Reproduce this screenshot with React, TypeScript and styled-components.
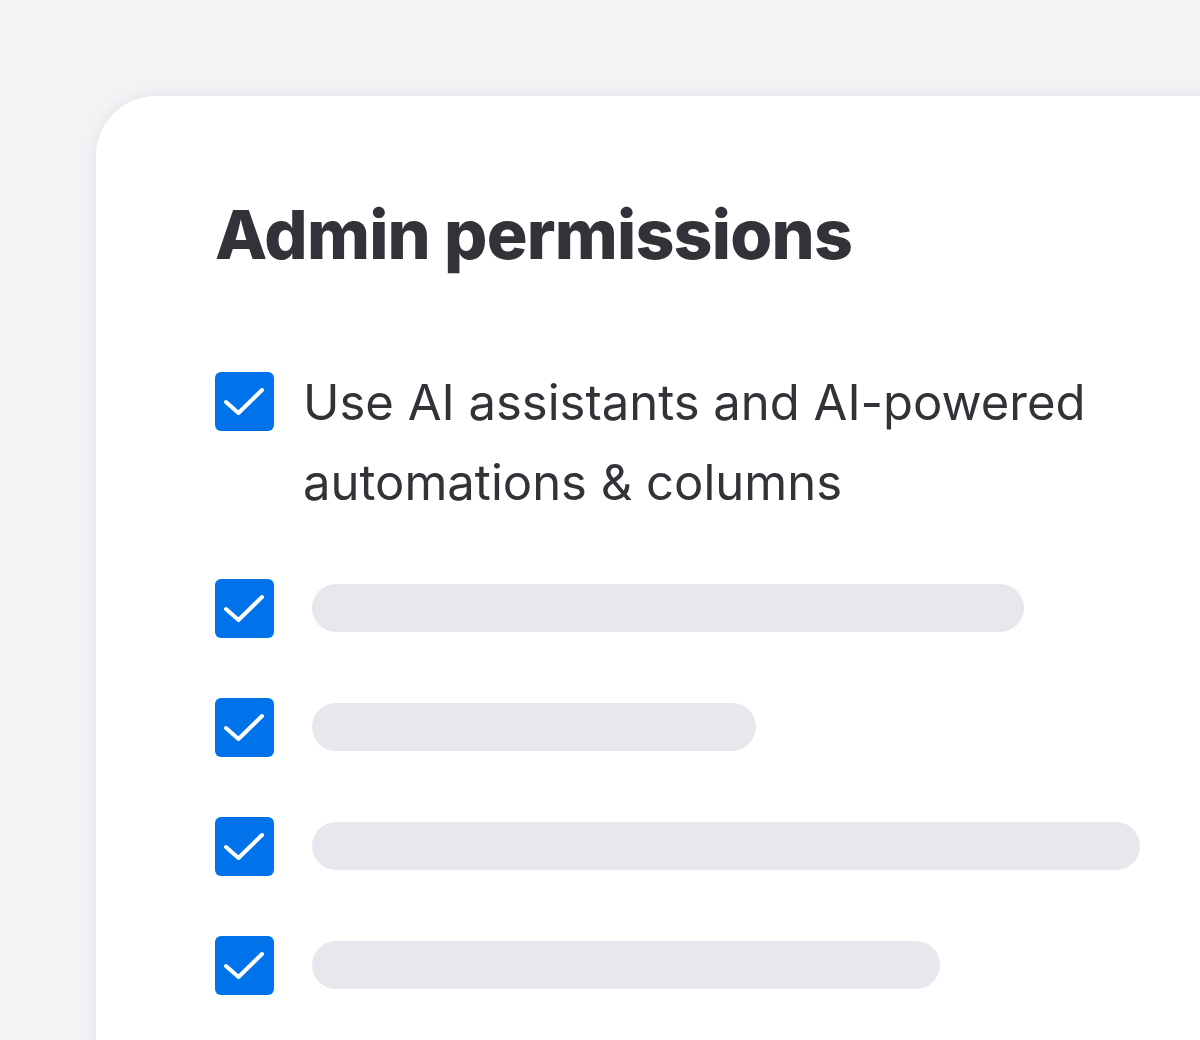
import React from "react";
import styled, { createGlobalStyle } from "styled-components";

const Global = createGlobalStyle`
  html, body { margin: 0; padding: 0; background: #f2f3f5; }
  body { width: 1200px; height: 1040px; overflow: hidden; }
`;

const Page = styled.div`
  width: 1200px;
  height: 1040px;
  box-sizing: border-box;
  padding: 96px 0 0 96px;
  overflow: hidden;
  background: #f2f3f5;
`;

const Card = styled.div`
  width: 1200px;
  height: 1000px;
  box-sizing: border-box;
  background: #ffffff;
  border-radius: 60px 0 0 0;
  box-shadow: 0 0 16px rgba(30, 35, 60, 0.07);
  padding: 96px 0 0 119px;
  color: #323338;
`;

const Title = styled.h1`
  margin: 0;
  font-family: Inter, sans-serif;
  font-weight: 800;
  font-size: 68px;
  line-height: 84px;
  letter-spacing: -0.8px;
  color: #323338;
`;

const List = styled.div`
  display: flex;
  flex-direction: column;
  margin-top: 96px;
`;

const Row = styled.div<{ $gap: number }>`
  display: flex;
  align-items: flex-start;
  gap: 29px;
  margin-bottom: ${(p) => p.$gap}px;
`;

const Box = styled.div`
  flex: 0 0 auto;
  width: 59px;
  height: 59px;
  border-radius: 6px;
  background: #0073ea;
  display: flex;
  align-items: center;
  justify-content: center;
`;

const Label = styled.div`
  font-family: Inter, sans-serif;
  font-size: 49px;
  font-weight: 400;
  line-height: 80px;
  margin-top: -9px;
  color: #323338;
  max-width: 820px;
`;

const Bar = styled.div<{ $w: number }>`
  width: ${(p) => p.$w}px;
  height: 48px;
  border-radius: 24px;
  background: #e7e8ed;
  margin: 5px 0 0 9px;
`;

const Check = () => (
  <svg width="59" height="59" viewBox="0 0 59 59" fill="none">
    <path d="M11 30 L23.5 41 L47 18" stroke="#fff" strokeWidth="4" strokeLinecap="round" strokeLinejoin="round" />
  </svg>
);

const bars = [712, 444, 828, 628];

export default function App() {
  return (
    <>
      <Global />
      <Page>
        <Card>
          <Title>Admin permissions</Title>
          <List>
            <Row $gap={56}>
              <Box><Check /></Box>
              <Label>Use AI assistants and AI-powered automations &amp; columns</Label>
            </Row>
            {bars.map((w, i) => (
              <Row key={i} $gap={60}>
                <Box><Check /></Box>
                <Bar $w={w} />
              </Row>
            ))}
          </List>
        </Card>
      </Page>
    </>
  );
}
